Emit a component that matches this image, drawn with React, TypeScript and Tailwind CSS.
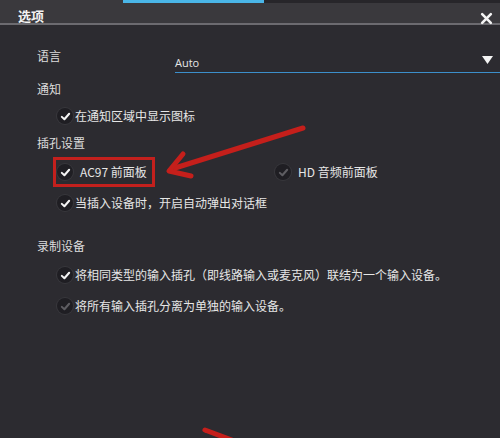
import React from "react"

const font = { fontFamily: '"Noto Sans CJK SC", "Noto Sans", sans-serif' }

function Check({ disabled = false }: { disabled?: boolean }) {
  return (
    <span className="flex h-4 w-4 shrink-0 items-center justify-center rounded-full bg-[#1f1e23] shadow-[0_0_0_1px_#38373c]">
      <svg width="11" height="11" viewBox="0 0 12 12">
        <path
          d="M2 6.4 L4.8 9 L10 3"
          fill="none"
          stroke={disabled ? "#5e5d62" : "#f4f4f4"}
          strokeWidth="2.2"
          strokeLinecap="round"
          strokeLinejoin="round"
        />
      </svg>
    </span>
  )
}

function Option({ text, disabled = false }: { text: string; disabled?: boolean }) {
  return (
    <div className="flex h-[22px] items-center gap-[2px] pl-[57px]">
      <Check disabled={disabled} />
      <span className="text-[12px] text-[#e6e6e6]">{text}</span>
    </div>
  )
}

function Section({ title, className }: { title: string; className: string }) {
  return (
    <div className={`flex h-[22px] items-center pl-[37px] text-[12px] text-[#dcdcdc] ${className}`}>
      {title}
    </div>
  )
}

export default function App() {
  return (
    <div className="relative h-[438px] w-[500px] overflow-hidden bg-[#2c2b30]" style={font}>
      {/* strip from the window behind */}
      <div className="flex h-[3px] bg-[#3a393d]">
        <div className="w-[123px]" />
        <div className="w-[141px] bg-[#4ab6e8]" />
        <div className="flex-1 bg-[#27262a]" />
      </div>

      {/* header */}
      <div className="flex h-[22px] items-end justify-between border-b-2 border-[#6c6b70] bg-[#3a393d] pb-[1px] pl-[18px] pr-[7px]">
        <span className="text-[13px] font-bold leading-none text-[#f2f2f2]">选项</span>
        <svg width="13" height="13" viewBox="0 0 12 12" className="mb-[-3px]">
          <path d="M2 2 L10 10 M10 2 L2 10" stroke="#f4f4f4" strokeWidth="2.4" strokeLinecap="round" />
        </svg>
      </div>

      {/* language */}
      <div className="mt-[19px] flex h-[30px] items-start pl-[37px]">
        <span className="w-[138px] text-[12px] leading-[24px] text-[#dcdcdc]">语言</span>
        <div className="flex h-[29px] flex-1 items-end justify-between border-b-[1.5px] border-[#3c8fcb] pb-[1px] pr-[7px]">
          <span className="text-[11px] leading-[16px] text-[#e6e6e6]" style={{ fontFamily: '"Open Sans", sans-serif' }}>
            Auto
          </span>
          <svg width="11" height="9" viewBox="0 0 11 9" className="mb-[6px]">
            <path d="M0 0 H11 L5.5 8 Z" fill="#f4f4f4" />
          </svg>
        </div>
      </div>

      <Section title="通知" className="mt-[4px]" />
      <div className="mt-[5px]">
        <Option text="在通知区域中显示图标" />
      </div>

      <Section title="插孔设置" className="mt-[5px]" />
      <div className="mt-[3px] flex h-[30px] items-center">
        <div className="ml-[53px] flex h-[30px] w-[102px] items-center gap-[7px] border-[3px] border-[#c3201d] pl-[1px]">
          <Check />
          <span className="text-[12px] text-[#e6e6e6]">AC97 前面板</span>
        </div>
        <div className="ml-[120px] flex items-center gap-[7px]">
          <Check disabled />
          <span className="text-[12px] text-[#e6e6e6]">HD 音频前面板</span>
        </div>
      </div>
      <div className="mt-[5px]">
        <Option text="当插入设备时，开启自动弹出对话框" />
      </div>

      <Section title="录制设备" className="mt-[21px]" />
      <div className="mt-[7px]">
        <Option text="将相同类型的输入插孔（即线路输入或麦克风）联结为一个输入设备。" />
      </div>
      <div className="mt-[9px]">
        <Option text="将所有输入插孔分离为单独的输入设备。" disabled />
      </div>

      {/* annotation arrows */}
      <svg className="pointer-events-none absolute inset-0" width="500" height="438" viewBox="0 0 500 438">
        <g stroke="#c51f1b" strokeWidth="5" strokeLinecap="round" strokeLinejoin="round" fill="none">
          <path d="M303 128 L175 168" />
          <path d="M183 154 L169 171 L191 176" />
          <path d="M205 430 L245 445" />
        </g>
      </svg>
    </div>
  )
}
